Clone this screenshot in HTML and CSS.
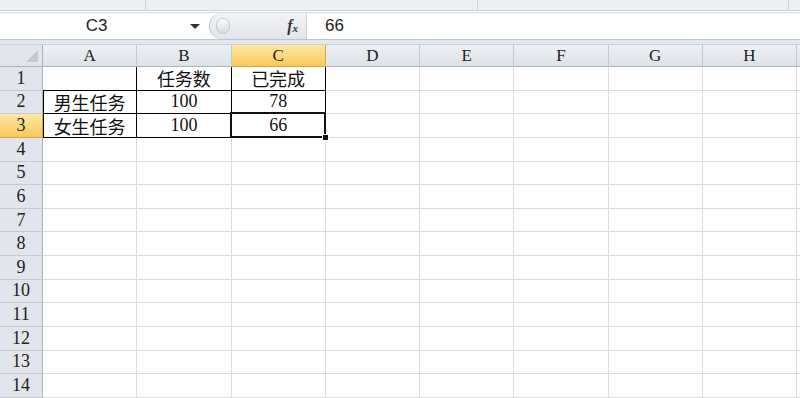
FILE: index.html
```html
<!DOCTYPE html>
<html lang="zh-CN">
<head>
  <meta charset="UTF-8">
  <title>Excel - 任务表</title>
  <link rel="stylesheet" href="styles.css">
</head>
<body>

  <!-- ribbon bottom edge -->
  <div class="ribbon">
    <div class="group g1"></div>
    <div class="group g2"></div>
    <div class="group g3"></div>
    <div class="group g4"></div>
  </div>

  <!-- formula bar -->
  <div class="formula-bar">
    <div class="name-box">
      <span class="name">C3</span>
      <span class="caret"></span>
    </div>
    <div class="fx-area">
      <span class="grip"></span>
      <span class="fx">f<sub>x</sub></span>
    </div>
    <div class="formula">66</div>
  </div>
  <div class="bar-gap"></div>

  <!-- sheet -->
  <div class="sheet" id="sheet"></div>

  <script>
    const cols = ["A", "B", "C", "D", "E", "F", "G", "H"];
    const data = {
      "B1": "任务数", "C1": "已完成",
      "A2": "男生任务", "B2": "100", "C2": "78",
      "A3": "女生任务", "B3": "100", "C3": "66"
    };
    const boxed = ["B1", "C1", "A2", "B2", "C2", "A3", "B3", "C3"];
    const sheet = document.getElementById("sheet");

    function add(cls, text) {
      const el = document.createElement("div");
      el.className = cls;
      if (text) el.textContent = text;
      sheet.appendChild(el);
      return el;
    }

    add("corner").innerHTML = '<span class="tri"></span>';
    cols.forEach(c => add("col-head" + (c === "C" ? " active" : ""), c));
    add("col-head rest");

    for (let r = 1; r <= 14; r++) {
      add("row-head" + (r === 3 ? " active" : ""), String(r));
      cols.forEach(c => {
        const ref = c + r;
        const text = data[ref] || "";
        let cls = "cell";
        if (boxed.includes(ref)) cls += " boxed";
        if (ref === "A1") cls += " edge";
        if (c === "A" && (r === 2 || r === 3)) cls += " left";
        if (/[\u4e00-\u9fff]/.test(text)) cls += " cjk";
        if (ref === "C3") cls += " selected";
        add(cls, text);
      });
      add("cell rest");
    }
  </script>

</body>
</html>
```

FILE: styles.css
```css
/* Basic */
body {
  margin: 0;
  padding: 0;
  width: 800px;
  height: 398px;
  overflow: hidden;
  background-color: #fff;
  font-family: "Liberation Sans", Arial, sans-serif;
}
/* Ribbon edge */
.ribbon {
  display: flex;
  height: 10px;
  background-color: #eceff3;
  border-bottom: 1px solid #c9d0d8;
}
.group {
  border-right: 1px solid #cfd5dc;
}
.g1 { width: 145px; }
.g2 { width: 331px; }
.g3 { width: 310px; }
.g4 { flex: 1; border-right: none; }
/* Formula bar */
.formula-bar {
  display: flex;
  height: 26px;
  margin-top: 1px;
  background-color: #fff;
  border-top: 1px solid #d4dae1;
  border-bottom: 1px solid #b9c3cd;
}
.name-box {
  width: 205px;
  display: flex;
  align-items: center;
}
.name {
  flex: 1;
  text-align: center;
  font-size: 17px;
  color: #222;
  padding-left: 3px;
}
.caret {
  width: 0;
  height: 0;
  border-left: 5px solid transparent;
  border-right: 5px solid transparent;
  border-top: 5px solid #333;
  margin-right: 5px;
}
.fx-area {
  width: 98px;
  margin-left: 4px;
  display: flex;
  align-items: center;
  justify-content: space-between;
  background: linear-gradient(#f3f4f6, #e2e5e9);
  border-left: 1px solid #b8bec6;
  border-radius: 13px 0 0 13px;
  padding: 0 6px;
  box-sizing: border-box;
  border-right: 1px solid #c8ced5;
}
.grip {
  width: 12px;
  height: 14px;
  border-radius: 7px;
  background: linear-gradient(#fdfdfd, #d6dade);
  border: 1px solid #c3c8ce;
}
.fx {
  font-family: "Liberation Serif", "Times New Roman", serif;
  font-style: italic;
  font-weight: bold;
  font-size: 16px;
  color: #333;
  margin-right: 2px;
}
.fx sub {
  font-size: 11px;
  vertical-align: -1px;
}
.formula {
  flex: 1;
  padding-left: 18px;
  font-size: 17px;
  color: #222;
  line-height: 26px;
}
.bar-gap {
  height: 4px;
  background-color: #e4e8ed;
  border-bottom: 1px solid #c6ced7;
}
/* Sheet grid */
.sheet {
  display: grid;
  grid-template-columns: 43px repeat(8, 94.25px) 1fr;
  grid-template-rows: 22px repeat(14, 23.64px);
  font-family: "Liberation Serif", "Times New Roman", serif;
}
.corner, .col-head, .row-head {
  background-color: #e2e6ec;
  color: #222;
  box-sizing: border-box;
  display: flex;
  align-items: center;
  justify-content: center;
}
.corner {
  border-right: 1px solid #a7b4c2;
  border-bottom: 1px solid #a7b4c2;
  position: relative;
}
.tri {
  position: absolute;
  right: 4px;
  bottom: 4px;
  width: 0;
  height: 0;
  border-left: 12px solid transparent;
  border-bottom: 12px solid #c2c8cf;
}
.col-head {
  font-size: 17px;
  border-right: 1px solid #c3cad3;
  border-bottom: 1px solid #a7b4c2;
  background: linear-gradient(#eef1f4, #dde2e8);
}
.col-head.rest {
  border-right: none;
}
.row-head {
  font-size: 18px;
  border-right: 1px solid #a7b4c2;
  border-bottom: 1px solid #c3cad3;
}
.col-head.active, .row-head.active {
  background: linear-gradient(#fde8a6, #f6c957);
  border-color: #d6a83c;
}
.cell {
  box-sizing: border-box;
  border-right: 1px solid #dcdcdc;
  border-bottom: 1px solid #dcdcdc;
  display: flex;
  align-items: center;
  justify-content: center;
  font-size: 18px;
  color: #111;
  position: relative;
}
.cell.rest {
  border-right: none;
}
.cell.cjk {
  font-family: "Noto Sans CJK SC", sans-serif;
  font-size: 18px;
  line-height: 1;
}
.cell.boxed, .cell.edge {
  border-right-color: #000;
  border-bottom-color: #000;
}
.cell.left {
  box-shadow: inset 1px 0 0 #000;
}
/* Active cell outline */
.cell.selected::after {
  content: "";
  position: absolute;
  left: -2px;
  top: -2px;
  right: -1px;
  bottom: -1px;
  border: 2px solid #111;
}
.cell.selected::before {
  content: "";
  position: absolute;
  right: -4px;
  bottom: -4px;
  width: 5px;
  height: 5px;
  background-color: #111;
  border: 1px solid #fff;
  z-index: 1;
}
```
